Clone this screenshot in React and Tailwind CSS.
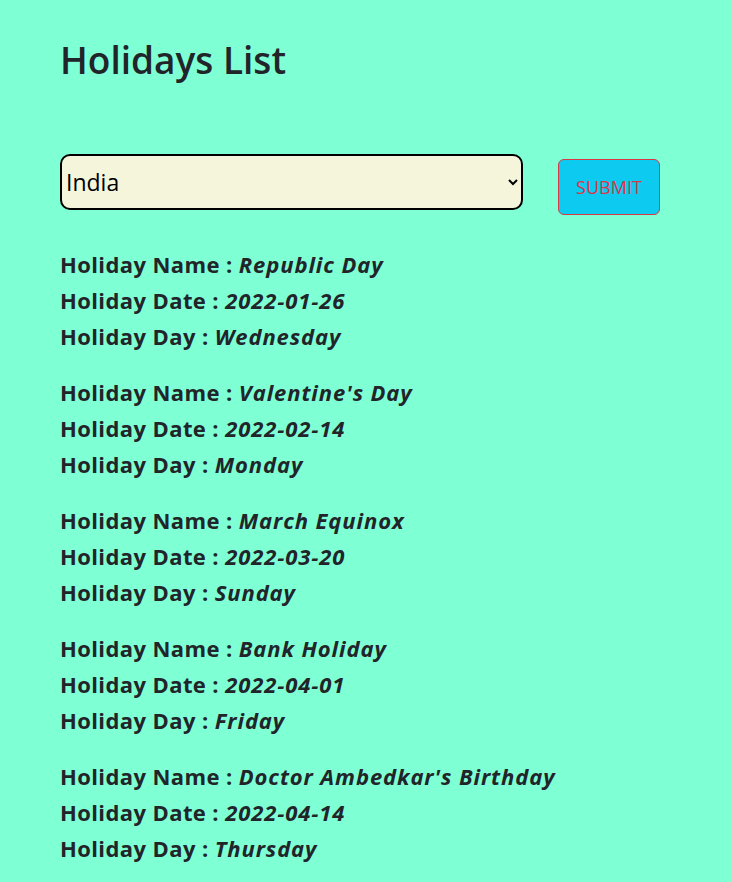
import React, { useState } from 'react';

const holidays = [
  { name: 'Republic Day', date: '2022-01-26', day: 'Wednesday' },
  { name: "Valentine's Day", date: '2022-02-14', day: 'Monday' },
  { name: 'March Equinox', date: '2022-03-20', day: 'Sunday' },
  { name: 'Bank Holiday', date: '2022-04-01', day: 'Friday' },
  { name: "Doctor Ambedkar's Birthday", date: '2022-04-14', day: 'Thursday' },
];

const App = () => {
  const [country, setCountry] = useState('India');

  return (
    <div className="min-h-screen bg-[#7fffd4] text-[#212529] font-['Open_Sans',sans-serif]">
      <div className="px-[60px] pt-[33px]">
        <h1 className="text-[37px] font-semibold leading-[54px]">Holidays List</h1>

        {/* Country picker */}
        <div className="flex items-start gap-[35px] mt-[67px]">
          <select
            value={country}
            onChange={(e) => setCountry(e.target.value)}
            className="w-[463px] h-[56px] rounded-[10px] border-2 border-black bg-[#f5f5dc] text-[23px] text-black pl-0 pr-2"
          >
            <option>India</option>
            <option>United States</option>
            <option>United Kingdom</option>
          </select>
          <button className="mt-[5px] w-[102px] h-[56px] rounded-[6px] border border-[#dc3545] bg-[#0dcaf0] text-[#dc3545] text-[18px]">
            SUBMIT
          </button>
        </div>

        {/* List */}
        <div className="mt-[31px] flex flex-col gap-[20px]">
          {holidays.map((h, i) => (
            <div key={i} className="text-[22px] tracking-[0.4px] font-bold leading-[36px]">
              <p>Holiday Name : <i className="tracking-[0.9px]">{h.name}</i></p>
              <p>Holiday Date : <i className="tracking-[0.9px]">{h.date}</i></p>
              <p>Holiday Day : <i className="tracking-[0.9px]">{h.day}</i></p>
            </div>
          ))}
        </div>
      </div>
    </div>
  );
};

export default App;
